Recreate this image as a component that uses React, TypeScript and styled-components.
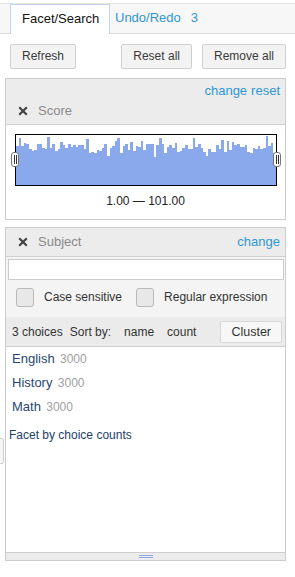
import React from "react";
import styled, { createGlobalStyle } from "styled-components";

const GlobalStyle = createGlobalStyle`
  html, body { margin: 0; padding: 0; background: #ffffff; }
  body { font-family: "Liberation Sans", Arial, sans-serif; color: #333; }
  * { box-sizing: border-box; }
`;

const Page = styled.div`
  position: relative;
  width: 295px;
  height: 577px;
  overflow: hidden;
  padding-top: 3px;
`;

const TabBar = styled.div`
  display: flex;
  align-items: flex-end;
  height: 31px;
  background: #f7f7f7;
  border-top: 1px solid #e4e4e4;
  border-bottom: 1px solid #dcdcdc;
  padding-left: 10px;
`;

const Tab = styled.div`
  height: 30px;
  width: 100px;
  margin-bottom: -1px;
  background: #fff;
  border: 1px solid #c2d3ef;
  border-bottom: none;
  padding-left: 11px;
  font-size: 13px;
  line-height: 28px;
  color: #111;
`;

const TabLink = styled.div`
  height: 29px;
  line-height: 28px;
  font-size: 13px;
  color: #3195d3;
  padding-left: 5px;
  display: flex;
  gap: 10px;
`;

const ButtonRow = styled.div`
  display: flex;
  justify-content: space-between;
  padding: 10px 9px 0 10px;
`;

const ButtonGroup = styled.div`
  display: flex;
  gap: 10px;
`;

const Button = styled.div`
  height: 25px;
  padding: 0 11px;
  border: 1px solid #cfcfcf;
  border-radius: 2px;
  background: #f3f3f3;
  font-size: 12px;
  line-height: 23px;
  color: #3a3a3a;
`;

const Panel = styled.div<{ $top: number }>`
  margin: ${(p) => p.$top}px 0 0 5px;
  width: 281px;
  border: 1px solid #cccccc;
  background: #fff;
`;

const ScoreHeader = styled.div`
  background: #ececec;
  border-bottom: 1px solid #cfcfcf;
  padding: 4px 5px 5px 12px;
  display: flex;
  flex-direction: column;
  gap: 4px;
`;

const LinkRow = styled.div`
  display: flex;
  justify-content: flex-end;
  gap: 4px;
  height: 16px;
  line-height: 16px;
  font-size: 13px;
`;

const Link = styled.span`
  color: #2f97d4;
  font-size: 13px;
`;

const TitleRow = styled.div`
  display: flex;
  align-items: center;
  justify-content: space-between;
  height: 16px;
  line-height: 16px;
`;

const Title = styled.div`
  display: flex;
  align-items: center;
  gap: 10px;
  font-size: 13px;
  color: #8a8a8a;
`;

const SubjectHeader = styled.div`
  background: #ececec;
  border-bottom: 1px solid #cfcfcf;
  padding: 6px 5px 6px 12px;
`;

const HistoBody = styled.div`
  padding: 9px 0 10px 9px;
`;

const HistoBox = styled.div`
  position: relative;
  width: 262px;
  height: 52px;
  border: 1px solid #000;
`;

const Handle = styled.div<{ $side: "left" | "right" }>`
  position: absolute;
  top: 17px;
  ${(p) => (p.$side === "left" ? "left: -5px;" : "right: -5px;")}
  width: 8px;
  height: 15px;
  background: #fff;
  border: 1px solid #777;
  border-radius: 3px;
  display: flex;
  justify-content: center;
  gap: 1px;
  padding: 2px 0;
  &::before, &::after {
    content: "";
    width: 1px;
    height: 100%;
    background: #333;
  }
`;

const RangeText = styled.div`
  margin-top: 7px;
  padding-right: 9px;
  text-align: center;
  font-size: 12px;
  line-height: 16px;
  color: #222;
`;

const Controls = styled.div`
  background: #f4f4f4;
  padding: 2px 1px 10px 2px;
`;

const SearchInput = styled.div`
  height: 21px;
  background: #fff;
  border: 1px solid #cccccc;
`;

const CheckRow = styled.div`
  display: flex;
  align-items: center;
  margin-top: 7px;
  padding-left: 8px;
  height: 20px;
`;

const Check = styled.div<{ $gapAfter: number }>`
  display: flex;
  align-items: center;
  gap: 10px;
  margin-right: ${(p) => p.$gapAfter}px;
  font-size: 12px;
  color: #333;
`;

const Box = styled.span`
  width: 18px;
  height: 19px;
  border: 1px solid #b9b9b9;
  border-radius: 3px;
  background: #e8e8e8;
`;

const SortRow = styled.div`
  display: flex;
  align-items: center;
  height: 30px;
  background: #ebebeb;
  border-bottom: 1px solid #cfcfcf;
  padding: 0 3px 0 6px;
  font-size: 12px;
  color: #333;
`;

const SortItem = styled.span<{ $ml: number }>`
  margin-left: ${(p) => p.$ml}px;
`;

const ClusterButton = styled.div`
  margin-left: auto;
  height: 22px;
  padding: 0 10px;
  border: 1px solid #d8d8d8;
  border-radius: 2px;
  background: #f7f7f7;
  font-size: 12.5px;
  line-height: 21px;
  color: #333;
`;

const ChoiceList = styled.div`
  height: 205px;
`;

const Choice = styled.div`
  height: 24px;
  line-height: 24px;
  padding-left: 6px;
  font-size: 13px;
  color: #27486e;
`;

const Count = styled.span`
  margin-left: 2px;
  font-size: 12px;
  color: #a0a0a0;
`;

const FacetBy = styled.div`
  margin-top: 8px;
  padding-left: 3px;
  line-height: 16px;
  font-size: 12px;
  color: #23406a;
`;

const Resizer = styled.div`
  height: 8px;
  background: #ececec;
  border-top: 1px solid #cfcfcf;
  display: flex;
  flex-direction: column;
  align-items: center;
  justify-content: center;
  gap: 1px;
  &::before, &::after {
    content: "";
    width: 14px;
    height: 1px;
    background: #8fa9e6;
  }
`;

const EdgeStub = styled.div`
  position: absolute;
  left: -6px;
  top: 438px;
  width: 10px;
  height: 26px;
  border: 1px solid #cfcfcf;
  border-radius: 2px;
  background: #f6f6f6;
`;

const CloseIcon = () => (
  <svg width="10" height="10" viewBox="0 0 10 10">
    <path d="M1.2 1.2 L8.8 8.8 M8.8 1.2 L1.2 8.8" stroke="#444" strokeWidth="2.2" />
  </svg>
);

function makeBars(): number[] {
  let s = 12345;
  const rnd = () => {
    s = (s * 1103515245 + 12345) % 2147483648;
    return s / 2147483648;
  };
  const out: number[] = [];
  for (let i = 0; i < 100; i++) {
    let h = 32 + rnd() * 11;
    const r = rnd();
    if (r > 0.9) h = 43 + rnd() * 6;
    else if (r < 0.06) h = 27 + rnd() * 4;
    out.push(Math.round(h));
  }
  return out;
}

const bars = makeBars();

const Histogram = () => (
  <svg width="260" height="50" viewBox="0 0 260 50" shapeRendering="crispEdges" style={{ display: "block" }}>
    {bars.map((h, i) => (
      <rect key={i} x={i * 2.6} y={50 - h} width={2.6} height={h} fill="#89a9ec" />
    ))}
  </svg>
);

export default function App() {
  return (
    <Page>
      <GlobalStyle />
      <TabBar>
        <Tab>Facet/Search</Tab>
        <TabLink>
          <span>Undo/Redo</span>
          <span>3</span>
        </TabLink>
      </TabBar>
      <ButtonRow>
        <Button>Refresh</Button>
        <ButtonGroup>
          <Button>Reset all</Button>
          <Button>Remove all</Button>
        </ButtonGroup>
      </ButtonRow>

      <Panel $top={9}>
        <ScoreHeader>
          <LinkRow>
            <Link>change</Link>
            <Link>reset</Link>
          </LinkRow>
          <TitleRow>
            <Title>
              <CloseIcon />
              <span>Score</span>
            </Title>
          </TitleRow>
        </ScoreHeader>
        <HistoBody>
          <HistoBox>
            <Histogram />
            <Handle $side="left" />
            <Handle $side="right" />
          </HistoBox>
          <RangeText>1.00 — 101.00</RangeText>
        </HistoBody>
      </Panel>

      <Panel $top={7}>
        <SubjectHeader>
          <TitleRow>
            <Title>
              <CloseIcon />
              <span>Subject</span>
            </Title>
            <Link>change</Link>
          </TitleRow>
        </SubjectHeader>
        <Controls>
          <SearchInput />
          <CheckRow>
            <Check $gapAfter={14}>
              <Box />
              <span>Case sensitive</span>
            </Check>
            <Check $gapAfter={0}>
              <Box />
              <span>Regular expression</span>
            </Check>
          </CheckRow>
        </Controls>
        <SortRow>
          <span>3 choices</span>
          <SortItem $ml={7}>Sort by:</SortItem>
          <SortItem $ml={13}>name</SortItem>
          <SortItem $ml={13}>count</SortItem>
          <ClusterButton>Cluster</ClusterButton>
        </SortRow>
        <ChoiceList>
          <Choice>
            English<Count> 3000</Count>
          </Choice>
          <Choice>
            History<Count> 3000</Count>
          </Choice>
          <Choice>
            Math<Count> 3000</Count>
          </Choice>
          <FacetBy>Facet by choice counts</FacetBy>
        </ChoiceList>
        <Resizer />
      </Panel>
      <EdgeStub />
    </Page>
  );
}
